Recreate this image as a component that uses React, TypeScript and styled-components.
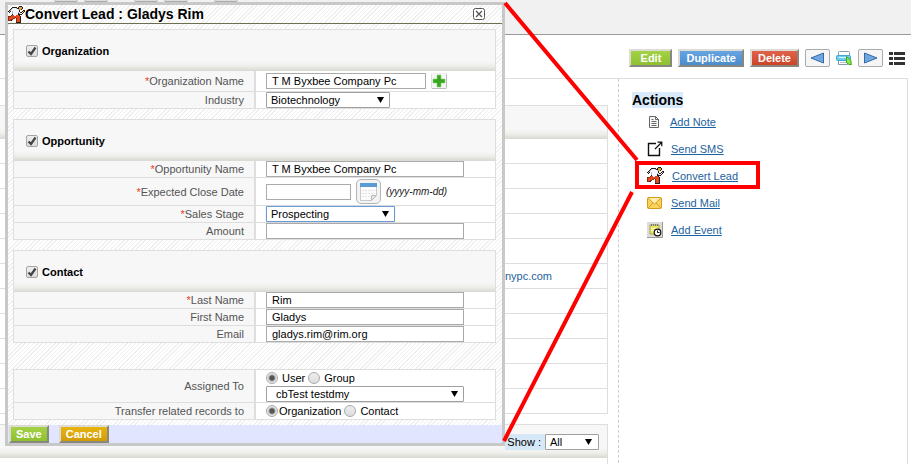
import React from "react";
import styled, { createGlobalStyle, css } from "styled-components";

const GlobalStyle = createGlobalStyle`
  * { box-sizing: border-box; }
  html, body { margin: 0; background: #fff; }
  body { font: 11px/14px "Liberation Sans", Arial, sans-serif; color: #000; overflow: hidden; }
  input, select, button { font: inherit; color: inherit; margin: 0; }
`;

const line = "#dedede";
const headFade = "linear-gradient(#f7f7f7 calc(100% - 10px), #eeeeea calc(100% - 5px), #d9d9d3)";

const Page = styled.div`
  position: relative;
  display: flex;
  flex-direction: column;
  height: 100vh;
  overflow: hidden;
`;

const TopBar = styled.header`
  flex: 0 0 35px;
  display: flex;
  align-items: flex-start;
  gap: 6px;
  padding-left: 54px;
  background: #f1f1f1;
  border-bottom: 1px solid #999;
`;

const TopTab = styled.span<{ $gap?: boolean }>`
  width: 24px;
  height: 2px;
  margin-left: ${(p) => (p.$gap ? "20px" : "0")};
  background: #ddd;
  border-bottom: 1px solid #aaa;
  border-radius: 0 0 4px 4px;
`;

const tones = {
  green: "linear-gradient(#a4d246, #8fc02f)",
  blue: "linear-gradient(#67a5e2, #4b8ccb)",
  red: "linear-gradient(#e0634c, #cb4528)",
  gold: "linear-gradient(#e8b410, #d29c08)",
};

const PushButton = styled.button<{ $tone: keyof typeof tones }>`
  height: 18px;
  padding: 0 6px;
  border: 2px solid;
  border-color: #dcdcd4 #888880 #888880 #dcdcd4;
  background: ${(p) => tones[p.$tone]};
  color: #fff;
  font-weight: bold;
  line-height: 14px;
`;

const Toolbar = styled.div`
  flex: 0 0 43px;
  display: flex;
  align-items: center;
  justify-content: flex-end;
  gap: 6px;
  padding: 3px 6px 0 0;
  ${PushButton} { min-width: 43px; }
`;

const NavButton = styled.button`
  display: flex;
  align-items: center;
  justify-content: center;
  width: 25px;
  height: 18px;
  padding: 0;
  border: 1px solid #aaa;
  border-radius: 2px;
  background: #f6f6f6;
`;

const IconButton = styled.button`
  display: flex;
  padding: 0;
  border: 0;
  background: none;
`;

const Panel = styled.main`
  flex: 1;
  display: flex;
  margin-right: 3px;
  border: 1px solid ${line};
  border-width: 1px 1px 0 0;
`;

const Details = styled.section`
  flex: 1;
  padding: 26px 10px 0 0;
  border-right: 1px dashed #ccc;
`;

const Block = styled.div`
  margin-bottom: 10px;
  border: 1px solid ${line};
  border-left: 0;
`;

const BlockHead = styled.div`
  display: flex;
  align-items: center;
  justify-content: flex-end;
  height: 33px;
  padding: 0 8px 0 0;
  background: ${headFade};
`;

const DetailRow = styled.div`
  height: 25px;
  padding: 5px 55px 0 0;
  border-bottom: 1px solid ${line};
  text-align: right;
  &:last-child {
    height: 24px;
    border-bottom: 0;
  }
`;

const ShowLabel = styled.label`
  padding: 1px 4px 1px 2px;
  background: #d6e7f7;
`;

const Link = styled.a`
  color: #1c62a0;
  text-decoration: none;
`;

const Sidebar = styled.aside`
  flex: 0 0 288px;
  padding: 13px 0 0 13px;
`;

const SideTitle = styled.h2`
  width: fit-content;
  margin: 0;
  background: #d9eafa;
  font-size: 14px;
  line-height: 16px;
`;

const ActionList = styled.ul`
  margin: 0;
  padding: 0 0 0 15px;
  list-style: none;
`;

const Action = styled.li`
  display: flex;
  align-items: center;
  gap: 8px;
  height: 27px;
`;

const ActionLink = styled(Link)`
  text-decoration: underline;
`;

const hatch = css`
  background: repeating-linear-gradient(135deg, #fff 0 2px, #efefef 2px 3px);
`;

const Dialog = styled.form`
  position: absolute;
  left: 5px;
  top: 2px;
  width: 500px;
  max-width: calc(100% - 10px);
  border: 3px solid #c8c8c8;
  ${hatch}
`;

const DialogTitle = styled.div`
  display: flex;
  align-items: center;
  justify-content: space-between;
  height: 19px;
  padding-right: 17px;
  border-bottom: 1px solid #6e6e50;
`;

const TitleText = styled.h1`
  display: flex;
  align-items: center;
  margin: 0;
  font-size: 14px;
  line-height: 16px;
`;

const Body = styled.div`
  display: flex;
  flex-direction: column;
  gap: 10px;
  padding: 5px 6px 5px 5px;
`;

const Group = styled.div<{ $apart?: boolean }>`
  margin-top: ${(p) => (p.$apart ? "16px" : "0")};
  border: 1px solid ${line};
  background: #fff;
`;

const GroupHead = styled.div`
  display: flex;
  align-items: center;
  gap: 4px;
  height: 41px;
  padding-left: 12px;
  background: ${headFade};
  font-weight: bold;
`;

const Field = styled.div<{ $h: number }>`
  display: grid;
  grid-template-columns: 242px 1fr;
  height: ${(p) => p.$h}px;
  border-bottom: 1px solid ${line};
  &:last-child {
    height: ${(p) => p.$h - 1}px;
    border-bottom: 0;
  }
`;

const fieldLabel = css`
  display: flex;
  align-items: center;
  justify-content: flex-end;
  padding-right: 10px;
  background: #f7f7f7;
  border-right: 2px solid ${line};
  color: #545454;
`;
const FieldLabel = styled.label`${fieldLabel}`;
const FieldCaption = styled.div`${fieldLabel}`;

const Star = styled.span`
  color: #e8402c;
`;

const Value = styled.div`
  display: flex;
  align-items: center;
  gap: 5px;
  padding-left: 10px;
`;

const Stack = styled.div`
  display: flex;
  flex-direction: column;
  gap: 1px;
  padding: 1px 0 0 10px;
`;

const Choices = styled.div`
  display: flex;
  align-items: center;
`;

const Choice = styled.label<{ $gap: number }>`
  display: flex;
  align-items: center;
  gap: ${(p) => p.$gap}px;
  margin-right: 3px;
`;

const TextInput = styled.input<{ $w: number }>`
  width: ${(p) => p.$w}px;
  height: 16px;
  padding: 0 5px;
  border: 1px solid #aaa;
  background: #fff;
  line-height: 14px;
`;

const SelectBox = styled.span<{ $w: number; $right: number }>`
  position: relative;
  display: inline-flex;
  width: ${(p) => p.$w}px;
  svg {
    position: absolute;
    right: ${(p) => p.$right}px;
    top: 5px;
    pointer-events: none;
  }
`;

const SelectInput = styled.select<{ $focus?: boolean; $pad: number }>`
  appearance: none;
  width: 100%;
  height: 16px;
  padding: 0 0 0 ${(p) => p.$pad}px;
  border: 1px solid ${(p) => (p.$focus ? "#6f9ad3" : "#a0a0a0")};
  border-radius: 1px;
  box-shadow: ${(p) => (p.$focus ? "0 0 1px #6f9ad3" : "none")};
  background: #fff;
  line-height: 14px;
`;

const CheckWrap = styled.span`
  position: relative;
  display: inline-flex;
  svg { position: absolute; left: 1px; top: 1px; pointer-events: none; }
`;

const CheckInput = styled.input`
  appearance: none;
  width: 12px;
  height: 12px;
  border: 1px solid #a5a5a5;
  border-radius: 2px;
  background: linear-gradient(#eee, #ddd);
`;

const Radio = styled.input`
  appearance: none;
  width: 12px;
  height: 12px;
  border: 1px solid #aaa;
  border-radius: 50%;
  background: linear-gradient(#eee, #ddd);
  &:checked { background: radial-gradient(circle, #555 0 2px, #e4e4e4 4px); }
`;

const AddButton = styled.button`
  display: flex;
  align-items: center;
  justify-content: center;
  width: 16px;
  height: 16px;
  padding: 0;
  border: 1px solid #ccc;
  border-color: #eee #bbb #bbb #ddd;
  border-radius: 2px;
  background: #f7f7f7;
`;

const DateButton = styled.button`
  display: flex;
  align-items: center;
  justify-content: center;
  width: 25px;
  height: 25px;
  padding: 0;
  border: 1px solid #b5b5b5;
  border-radius: 5px;
  background: #f3f3f3;
`;

const Hint = styled.em`
  font-size: 10px;
  color: #222;
`;

const Footer = styled.div`
  display: flex;
  align-items: flex-end;
  gap: 10px;
  height: 18px;
  padding-left: 1px;
  background: #e1e5ff;
  ${PushButton} { padding: 0 5px; }
`;

const Callout = styled.svg`
  position: absolute;
  left: 0;
  top: 0;
  pointer-events: none;
`;

const runnerInk: Record<string, string> = {
  K: "#221c1c",
  D: "#8a2a12",
  R: "#e2481c",
  W: "#f4f6fb",
  B: "#a9b9d6",
  Y: "#d9a441",
};

const runnerRows = [
  "...........KKK...",
  "....KKKKK.KYYYK..",
  "...KBWWWBKKYYYK..",
  "..KBWWWWWWBYYK...",
  ".KBWWWWWWWWK...KK",
  "KYK.BWWWWWWK..KYK",
  ".K..BWWWWWBWKKWK.",
  "....BWWWWWKBWWK..",
  "....KWWWWWKKKK...",
  "...DRRWWRRRK.....",
  "DDDRRRRRRRRRK....",
  "DRRRRRRDRRRRK....",
  "DRRRRDD.DRRRK....",
  "DRRDD...DRRRK....",
  "DDDK....DRRRK....",
  "........DRRRK....",
  "........KKKKK....",
];

const Runner = () => (
  <svg width="17" height="17" viewBox="0 0 17 17" shapeRendering="crispEdges" aria-hidden="true">
    {runnerRows.flatMap((row, y) =>
      [...row].map((c, x) =>
        runnerInk[c] ? <rect key={`${x}-${y}`} x={x} y={y} width="1" height="1" fill={runnerInk[c]} /> : null,
      ),
    )}
  </svg>
);

const Arrow = () => (
  <svg width="7" height="6" viewBox="0 0 7 6" aria-hidden="true"><path d="M0 0H7L3.500 6z" /></svg>
);

const NoteIcon = () => (
  <svg width="15" height="14" viewBox="0 0 15 14" aria-hidden="true">
    <path d="M2.500 1.500h6l3 3v8h-9z" fill="#f8f8f8" stroke="#666" />
    <path d="M8.500 1.500v3h3M4.500 4.500h2M4.500 6.500h5M4.500 8.500h5M4.500 10.500h5" fill="none" stroke="#666" />
  </svg>
);

const SmsIcon = () => (
  <svg width="16" height="16" viewBox="0 0 16 16" aria-hidden="true">
    <path d="M9 2.500H1.500v12h11V7" fill="none" stroke="#111" strokeWidth="1.400" />
    <path d="M8 8l6.500-6.500M10.500 1.200h4.300v4" fill="none" stroke="#111" strokeWidth="1.200" />
  </svg>
);

const MailIcon = () => (
  <svg width="16" height="12" viewBox="0 0 16 12" aria-hidden="true">
    <rect x=".5" y=".5" width="14" height="11" rx="1" fill="#fbd45f" stroke="#d99a1c" />
    <path d="M1 11l5-5M14 11L9 6" stroke="#dc9c24" />
    <path d="M1 1l6.500 6L14 1" fill="#fff0b0" stroke="#dc9c24" />
  </svg>
);

const EventIcon = () => (
  <svg width="16" height="16" viewBox="0 0 16 16" aria-hidden="true">
    <path d="M0 0h16v16H0z" fill="#dcdcd8" />
    <path d="M15.500 0v15.500H0" fill="none" stroke="#999" />
    <path d="M3 3h9v9H3z" fill="#eee95a" stroke="#8d8a45" strokeWidth=".7" />
    <path d="M4.500 2v2M6.500 2v2M8.500 2v2M10.500 2v2" stroke="#777" />
    <path d="M4 6.500h7M4 8.500h4" stroke="#fffbd0" />
    <circle cx="10.500" cy="10.500" r="3.300" fill="#fff" stroke="#111" strokeWidth="1.200" />
    <path d="M10.500 8.500v2h2" fill="none" stroke="#111" />
  </svg>
);

const PrintIcon = () => (
  <svg width="16" height="15" viewBox="0 0 16 15" aria-hidden="true">
    <rect x="2.500" y=".5" width="11" height="5" rx="1" fill="#fff" stroke="#8999a5" />
    <path d="M2.500 9.500h9v4h-9z" fill="#fff" stroke="#8999a5" />
    <path d="M4 11.500h6" stroke="#b5c0c8" />
    <rect x=".5" y="4.500" width="14" height="5" rx="1" fill="#6bcdf0" stroke="#46a6cf" />
    <path d="M3 6.500h8" stroke="#d5f5ff" />
    <path d="M10.500 5.500l4.500 4v2.500l.5 1.500h-2.500l-2.500-2z" fill="#8bea4a" stroke="#3fa51e" />
  </svg>
);

const Check = ({ id, label }: { id: string; label: string }) => (
  <GroupHead>
    <CheckWrap>
      <CheckInput id={id} type="checkbox" defaultChecked />
      <svg width="10" height="10" viewBox="0 0 10 10" aria-hidden="true">
        <path d="M1.500 5.500L4 8l4.500-6.500" fill="none" stroke="#444" strokeWidth="2.200" />
      </svg>
    </CheckWrap>
    <label htmlFor={id}>{label}</label>
  </GroupHead>
);

const Picker = ({ id, w, right, pad = 4, focus, value, label }: {
  id: string; w: number; right: number; pad?: number; focus?: boolean; value: string; label?: string;
}) => (
  <SelectBox $w={w} $right={right}>
    <SelectInput id={id} $pad={pad} $focus={focus} aria-label={label}>
      <option>{value}</option>
    </SelectInput>
    <Arrow />
  </SelectBox>
);

const Label = ({ id, must, children }: { id: string; must?: boolean; children: React.ReactNode }) => (
  <FieldLabel htmlFor={id}>{must && <Star>*</Star>}{children}</FieldLabel>
);

const TextField = ({ id, label, must, value, h = 17 }: {
  id: string; label: string; must?: boolean; value: string; h?: number;
}) => (
  <Field $h={h}>
    <Label id={id} must={must}>{label}</Label>
    <Value><TextInput id={id} $w={198} defaultValue={value} /></Value>
  </Field>
);

const detailRows = ["", "", "", "", "", "nypc.com", "", "", "", "", ""];

const actions = [
  { text: "Add Note", icon: <NoteIcon /> },
  { text: "Send SMS", icon: <SmsIcon /> },
  { text: "Convert Lead", icon: <Runner /> },
  { text: "Send Mail", icon: <MailIcon /> },
  { text: "Add Event", icon: <EventIcon /> },
];

export default function App() {
  return (
    <>
      <GlobalStyle />
      <Page>
        <TopBar>
          <TopTab /><TopTab /><TopTab $gap /><TopTab /><TopTab $gap />
        </TopBar>
        <Toolbar>
          <PushButton $tone="green">Edit</PushButton>
          <PushButton $tone="blue">Duplicate</PushButton>
          <PushButton $tone="red">Delete</PushButton>
          <NavButton aria-label="Previous">
            <svg width="15" height="12" viewBox="0 0 15 12"><path d="M13.500 1v10L1 6z" fill="#6fa8e0" stroke="#3468a8" /></svg>
          </NavButton>
          <IconButton aria-label="Print"><PrintIcon /></IconButton>
          <NavButton aria-label="Next">
            <svg width="15" height="12" viewBox="0 0 15 12"><path d="M1.500 1v10L14 6z" fill="#6fa8e0" stroke="#3468a8" /></svg>
          </NavButton>
          <IconButton aria-label="List">
            <svg width="16" height="14" viewBox="0 0 16 14" fill="#333">
              <path d="M0 1h4v3H0zM5 1h11v3H5zM0 6h4v3H0zM5 6h11v3H5zM0 11h4v3H0zM5 11h11v3H5z" />
            </svg>
          </IconButton>
        </Toolbar>
        <Panel>
          <Details>
            <Block>
              <BlockHead />
              {detailRows.map((text, i) => (
                <DetailRow key={i}>{text && <Link href="#site">{text}</Link>}</DetailRow>
              ))}
            </Block>
            <Block>
              <BlockHead>
                <ShowLabel htmlFor="show">Show :</ShowLabel>
                <Picker id="show" w={54} right={7} value="All" />
              </BlockHead>
              <DetailRow />
            </Block>
          </Details>
          <Sidebar>
            <SideTitle>Actions</SideTitle>
            <ActionList>
              {actions.map((a) => (
                <Action key={a.text}>{a.icon}<ActionLink href="#action">{a.text}</ActionLink></Action>
              ))}
            </ActionList>
          </Sidebar>
        </Panel>

        <Dialog onSubmit={(e) => e.preventDefault()}>
          <DialogTitle>
            <TitleText><Runner />Convert Lead : Gladys Rim</TitleText>
            <IconButton type="button" aria-label="Close">
              <svg width="12" height="12" viewBox="0 0 12 12" fill="none" stroke="#555">
                <rect x=".5" y=".5" width="11" height="11" rx="2" fill="#fff" />
                <path d="M3 3l6 6M9 3L3 9" strokeWidth="1.300" />
              </svg>
            </IconButton>
          </DialogTitle>
          <Body>
            <Group>
              <Check id="org" label="Organization" />
              <Field $h={21}>
                <Label id="orgName" must>Organization Name</Label>
                <Value>
                  <TextInput id="orgName" $w={160} defaultValue="T M Byxbee Company Pc" />
                  <AddButton type="button" aria-label="Add organization">
                    <svg width="14" height="14" viewBox="0 0 14 14"><path d="M5 1h4v4h4v4H9v4H5V9H1V5h4z" fill="#38a51e" stroke="#8fd472" strokeWidth=".6" /></svg>
                  </AddButton>
                </Value>
              </Field>
              <Field $h={17}>
                <Label id="industry">Industry</Label>
                <Value><Picker id="industry" w={124} right={6} value="Biotechnology" /></Value>
              </Field>
            </Group>

            <Group>
              <Check id="opp" label="Opportunity" />
              <TextField id="oppName" label="Opportunity Name" must value="T M Byxbee Company Pc" />
              <Field $h={28}>
                <Label id="close" must>Expected Close Date</Label>
                <Value>
                  <TextInput id="close" $w={85} />
                  <DateButton type="button" aria-label="Pick a date">
                    <svg width="19" height="20" viewBox="0 0 19 20">
                      <path d="M1.500 1.500h16v12l-5 5h-11z" fill="#fbfbfb" stroke="#c4c9ce" />
                      <path d="M1 1h17v4H1z" fill="#5b9bd5" />
                      <path d="M3 8.500h13M3 11.500h13M3 14.500h9" stroke="#dfe4ea" strokeDasharray="2 1" />
                      <path d="M12.500 18.500v-5h5z" fill="#e5e5e5" stroke="#bbb" />
                    </svg>
                  </DateButton>
                  <Hint>(yyyy-mm-dd)</Hint>
                </Value>
              </Field>
              <Field $h={17}>
                <Label id="stage" must>Sales Stage</Label>
                <Value><Picker id="stage" w={129} right={6} focus value="Prospecting" /></Value>
              </Field>
              <TextField id="amount" label="Amount" value="" />
            </Group>

            <Group>
              <Check id="contact" label="Contact" />
              <TextField id="last" label="Last Name" must value="Rim" />
              <TextField id="first" label="First Name" value="Gladys" />
              <TextField id="email" label="Email" value="gladys.rim@rim.org" />
            </Group>

            <Group $apart>
              <Field $h={33}>
                <FieldCaption>Assigned To</FieldCaption>
                <Stack>
                  <Choices role="radiogroup" aria-label="Assigned To">
                    <Choice $gap={4}><Radio type="radio" name="assign" defaultChecked />User</Choice>
                    <Choice $gap={4}><Radio type="radio" name="assign" />Group</Choice>
                  </Choices>
                  <Picker id="owner" label="Assignee" w={198} right={6} pad={9} value="cbTest testdmy" />
                </Stack>
              </Field>
              <Field $h={17}>
                <FieldCaption>Transfer related records to</FieldCaption>
                <Value role="radiogroup" aria-label="Transfer related records to">
                  <Choices>
                    <Choice $gap={1}><Radio type="radio" name="transfer" defaultChecked />Organization</Choice>
                    <Choice $gap={4}><Radio type="radio" name="transfer" />Contact</Choice>
                  </Choices>
                </Value>
              </Field>
            </Group>
          </Body>
          <Footer>
            <PushButton $tone="green">Save</PushButton>
            <PushButton $tone="gold" type="button">Cancel</PushButton>
          </Footer>
        </Dialog>

        <Callout width="911" height="464" viewBox="0 0 911 464" fill="none" stroke="#f00" strokeWidth="4" aria-hidden="true">
          <path d="M505 3L637 160M504 441L632 192" />
          <rect x="637" y="163" width="121" height="24" />
        </Callout>
      </Page>
    </>
  );
}
